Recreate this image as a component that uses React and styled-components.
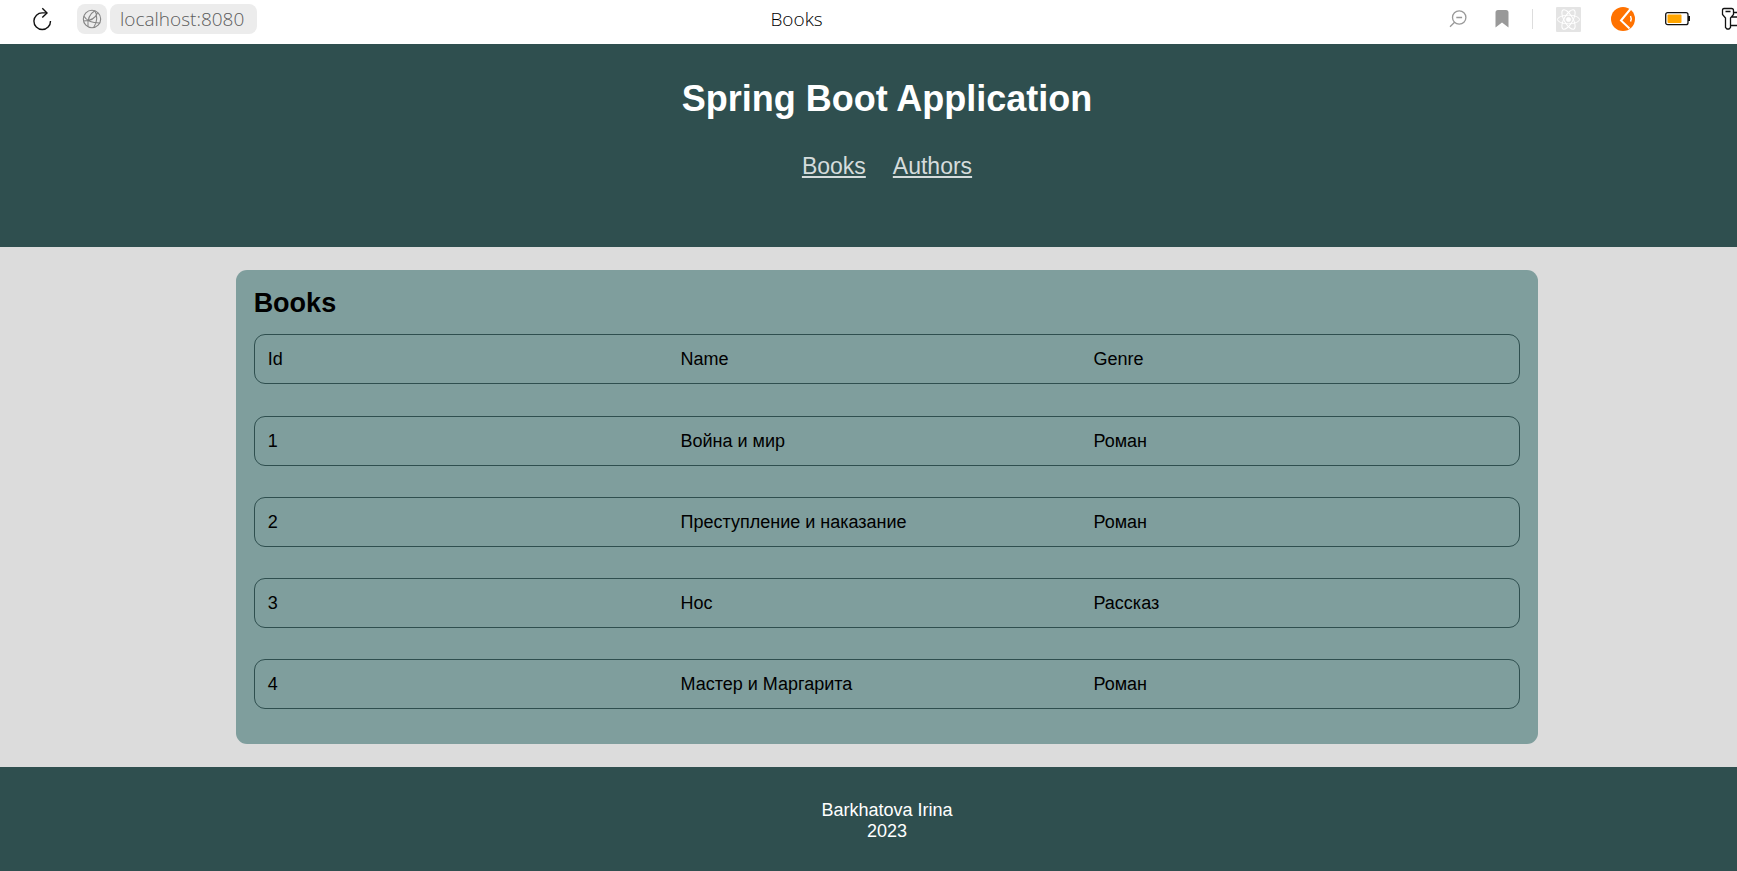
import React from "react";
import styled, { createGlobalStyle } from "styled-components";

const GlobalStyle = createGlobalStyle`
  * { box-sizing: border-box; }
  body {
    margin: 0;
    background: #dcdcdc;
    color: #000;
    font: 18px/21px "Liberation Sans", Arial, sans-serif;
  }
  #root { min-height: 100vh; display: flex; flex-direction: column; }
  h1, h2, p { margin: 0; }
`;

const Toolbar = styled.div`
  display: grid;
  grid-template-columns: 21fr auto 26fr;
  align-items: center;
  height: 44px;
  padding: 0 0 6px 32px;
  background: #fff;
  overflow: hidden;
  font: 300 19px/24px "Open Sans", "Noto Sans", sans-serif;
`;

const ToolGroup = styled.div`
  display: flex;
  align-items: center;
  justify-content: ${(p) => (p.$end ? "flex-end" : "flex-start")};
  gap: ${(p) => p.$gap}px;
`;

const IconButton = styled.button`
  display: flex;
  padding: 0;
  border: 0;
  background: none;
  svg { display: block; }
`;

const SiteButton = styled(IconButton)`
  width: 30px;
  height: 30px;
  align-items: center;
  justify-content: center;
  border-radius: 8px;
  background: #ececec;
`;

const Address = styled.input`
  width: 147px;
  height: 30px;
  padding: 0 0 0 10px;
  border: 0;
  border-radius: 8px;
  background: #ececec;
  color: #5c5c5c;
  font: inherit;
`;

const PageTitle = styled.span`
  font-weight: 300;
`;

const Divider = styled.span`
  width: 1px;
  height: 20px;
  background: #ddd;
`;

const Header = styled.header`
  display: flex;
  flex-direction: column;
  align-items: center;
  gap: 33px;
  height: 203px;
  padding: 34px 0 0 37px;
  background: #2f4f4f;
  color: #fff;
`;

const Heading = styled.h1`
  font-size: 36px;
  line-height: 42px;
`;

const Nav = styled.nav`
  display: flex;
  gap: 27px;
`;

const NavLink = styled.a`
  color: #d5dcdc;
  font-size: 23px;
  line-height: 27px;
`;

const Main = styled.main`
  display: flex;
  justify-content: center;
  padding: 23px 0 23px 37px;
`;

const Card = styled.section`
  width: 75vw;
  padding: 18px 18px 35px;
  border-radius: 11px;
  background: #7f9e9d;
`;

const CardTitle = styled.h2`
  margin-bottom: 16px;
  font-size: 27px;
  line-height: 30px;
`;

const Table = styled.table`
  display: flex;
  flex-direction: column;
  gap: 32px;
`;

const Rows = styled.tbody`
  display: flex;
  flex-direction: column;
  gap: 31px;
`;

const HeadRows = styled(Rows).attrs({ as: "thead" })``;

const Row = styled.tr`
  display: grid;
  grid-template-columns: repeat(3, 1fr);
  align-items: center;
  height: 50px;
  padding: 0 13px;
  border: 1px solid #2f4f4f;
  border-radius: 11px;
`;

const Cell = styled.td`
  padding: 0;
  text-align: left;
  font-weight: 400;
`;

const Footer = styled.footer`
  flex: 1;
  padding: 33px 0 29px 37px;
  background: #2f4f4f;
  color: #fff;
  text-align: center;
`;

const ReloadIcon = () => (
  <svg width="20" height="24" viewBox="0 0 20 24" fill="none" stroke="#111" strokeWidth="1.4">
    <path d="M14.5 5.9H10.5A8.3 8.3 0 1 0 18.5 14" />
    <path d="M10.300 1.300 15 5.900 10.300 10.500" />
  </svg>
);

const GlobeIcon = () => (
  <svg width="20" height="20" viewBox="0 0 20 20" fill="none" stroke="#858585" strokeWidth="1.1">
    <circle cx="10" cy="10" r="8.7" />
    <path d="M12.8 1.8C7.5 5 5.3 10.5 6 17.7M12.8 1.8C15.7 6 15.4 13 11.7 18.5M1.7 7C4.5 11.5 10.5 14 17.5 14M1.7 12C7 12 13 10 15.500 4" />
  </svg>
);

const ZoomOutIcon = () => (
  <svg width="18" height="18" viewBox="0 0 18 18" fill="none" stroke="#999" strokeWidth="1.3">
    <circle cx="10.2" cy="7.5" r="6.7" />
    <path d="M7.3 7.5h5.8M5.6 12.2 1 16.8" />
  </svg>
);

const BookmarkIcon = () => (
  <svg width="14" height="18" viewBox="0 0 14 18" fill="#999">
    <path d="M3 0h8q2.500 0 2.500 2.500V17.500L7 12.500.5 17.500V2.500Q.5 0 3 0Z" />
  </svg>
);

const ReactIcon = () => (
  <svg width="25" height="25" viewBox="0 0 25 25" fill="none" stroke="#fff" strokeWidth="1">
    <rect width="25" height="25" rx="1" fill="#e4e4e4" stroke="none" />
    <ellipse cx="12.5" cy="12.5" rx="11" ry="4.3" />
    <ellipse cx="12.5" cy="12.5" rx="11" ry="4.3" transform="rotate(60 12.5 12.5)" />
    <ellipse cx="12.5" cy="12.5" rx="11" ry="4.3" transform="rotate(120 12.5 12.5)" />
    <circle cx="12.5" cy="12.5" r="2" fill="#fff" />
  </svg>
);

const OrangeIcon = () => (
  <svg width="24" height="24" viewBox="0 0 24 24" fill="none">
    <circle cx="12" cy="12" r="12" fill="#ff7200" />
    <path d="M19.500 2 10 13.500 18.500 21.500" stroke="#fff" strokeWidth="2" />
    <path d="M19.500 9q1.500 3 0 5.500" stroke="#fff" strokeWidth="1.500" />
  </svg>
);

const BatteryIcon = () => (
  <svg width="26" height="14" viewBox="0 0 26 14" fill="none">
    <rect x=".7" y=".7" width="22.3" height="12" rx="2" stroke="#111" strokeWidth="1.3" />
    <rect x="2.5" y="2.5" width="14" height="8.5" rx="1" fill="#ffa500" />
    <path d="M23 4h2v5h-2Z" fill="#111" />
  </svg>
);

const KeyIcon = () => (
  <svg width="16" height="24" viewBox="0 0 16 24" fill="none" stroke="#111" strokeWidth="1.3">
    <path d="M3 1.500h7.500q2 0 2 2V7.500L9.500 11v9.500l-1.500 1.500H6L4.500 20.500V11L1.500 7.500V3.500q0-2 1.500-2ZM4.500 4.500h5M12.500 5.500H16M10.500 10H16M9.500 18.500H16" />
  </svg>
);

const books = [
  { id: 1, name: "Война и мир", genre: "Роман" },
  { id: 2, name: "Преступление и наказание", genre: "Роман" },
  { id: 3, name: "Нос", genre: "Рассказ" },
  { id: 4, name: "Мастер и Маргарита", genre: "Роман" },
];

export default function App() {
  return (
    <>
      <GlobalStyle />
      <Toolbar>
        <ToolGroup $gap={25}>
          <IconButton aria-label="Reload"><ReloadIcon /></IconButton>
          <ToolGroup $gap={3}>
            <SiteButton aria-label="Site information"><GlobeIcon /></SiteButton>
            <Address aria-label="Address" defaultValue="localhost:8080" />
          </ToolGroup>
        </ToolGroup>
        <PageTitle>Books</PageTitle>
        <ToolGroup $end $gap={30}>
          <ToolGroup $gap={28}>
            <IconButton aria-label="Zoom out"><ZoomOutIcon /></IconButton>
            <ToolGroup $gap={23}>
              <IconButton aria-label="Bookmark"><BookmarkIcon /></IconButton>
              <Divider />
              <IconButton aria-label="React tools"><ReactIcon /></IconButton>
            </ToolGroup>
          </ToolGroup>
          <IconButton aria-label="Extension"><OrangeIcon /></IconButton>
          <IconButton aria-label="Battery"><BatteryIcon /></IconButton>
          <IconButton aria-label="Passwords"><KeyIcon /></IconButton>
        </ToolGroup>
      </Toolbar>
      <Header>
        <Heading>Spring Boot Application</Heading>
        <Nav>
          <NavLink href="#books">Books</NavLink>
          <NavLink href="#authors">Authors</NavLink>
        </Nav>
      </Header>
      <Main>
        <Card id="books">
          <CardTitle>Books</CardTitle>
          <Table>
            <HeadRows>
              <Row>
                <Cell as="th" scope="col">Id</Cell>
                <Cell as="th" scope="col">Name</Cell>
                <Cell as="th" scope="col">Genre</Cell>
              </Row>
            </HeadRows>
            <Rows>
              {books.map((book) => (
                <Row key={book.id}>
                  <Cell>{book.id}</Cell>
                  <Cell>{book.name}</Cell>
                  <Cell>{book.genre}</Cell>
                </Row>
              ))}
            </Rows>
          </Table>
        </Card>
      </Main>
      <Footer>
        <p>Barkhatova Irina</p>
        <p>2023</p>
      </Footer>
    </>
  );
}
